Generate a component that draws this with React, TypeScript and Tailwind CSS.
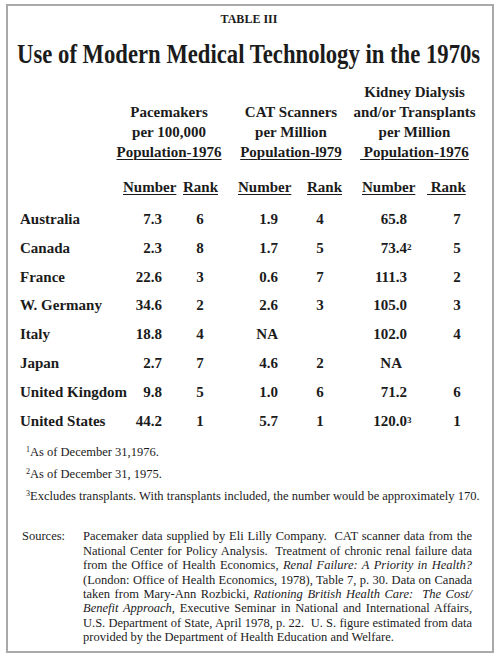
const rows = [
  { name: 'Australia', pn: '7.3', pr: '6', cn: '1.9', cr: '4', kn: '65.8', kr: '7' },
  { name: 'Canada', pn: '2.3', pr: '8', cn: '1.7', cr: '5', kn: '73.4', ks: '2', kr: '5' },
  { name: 'France', pn: '22.6', pr: '3', cn: '0.6', cr: '7', kn: '111.3', kr: '2' },
  { name: 'W. Germany', pn: '34.6', pr: '2', cn: '2.6', cr: '3', kn: '105.0', kr: '3' },
  { name: 'Italy', pn: '18.8', pr: '4', cn: 'NA', cr: '', kn: '102.0', kr: '4' },
  { name: 'Japan', pn: '2.7', pr: '7', cn: '4.6', cr: '2', kn: 'NA', kr: '' },
  { name: 'United Kingdom', pn: '9.8', pr: '5', cn: '1.0', cr: '6', kn: '71.2', kr: '6' },
  { name: 'United States', pn: '44.2', pr: '1', cn: '5.7', cr: '1', kn: '120.0', ks: '3', kr: '1' },
];

const App = () => {
  return (
    <div
      className="w-[500px] h-[657px] bg-white pt-[4px] pl-[6px] text-[#1b1b1b]"
      style={{ fontFamily: '"Liberation Serif", "Times New Roman", serif' }}
    >
      <div className="w-[488px] h-[649px] border-2 border-[#a9a9a9] pl-[12px] pt-[6px]">
        {/* titulo */}
        <div className="text-center text-[12px] leading-[14px] font-bold pr-[14px]">TABLE III</div>
        <div className="mt-[12px] pr-[14px] flex justify-center">
          <div className="shrink-0 text-[27px] leading-[32px] font-bold scale-x-[0.84] whitespace-nowrap">
            Use of Modern Medical Technology in the 1970s
          </div>
        </div>

        {/* tabla */}
        <div className="mt-[12px] grid grid-cols-[98px_62px_40px_80px_40px_85px_64px] text-[15px] font-bold">
          <div />
          <div className="col-span-2 self-end flex flex-col items-center leading-[20px] whitespace-nowrap">
            <span>Pacemakers</span>
            <span>per 100,000</span>
            <span className="underline underline-offset-2 decoration-1">Population-1976</span>
          </div>
          <div className="col-span-2 self-end flex flex-col items-center pl-[22px] leading-[20px] whitespace-nowrap">
            <span>CAT Scanners</span>
            <span>per Million</span>
            <span className="underline underline-offset-2 decoration-1">Population-l979</span>
          </div>
          <div className="col-span-2 self-end flex flex-col items-center leading-[20px] whitespace-nowrap">
            <span>Kidney Dialysis</span>
            <span>and/or Transplants</span>
            <span>per Million</span>
            <span className="underline underline-offset-2 decoration-1 whitespace-pre"> Population-1976</span>
          </div>

          {/* sub encabezados */}
          <div className="mt-[15px]" />
          <div className="mt-[15px] pl-[5px] leading-[20px]">
            <span className="underline underline-offset-2 decoration-1">Number</span>
          </div>
          <div className="mt-[15px] pl-[3px] leading-[20px]">
            <span className="underline underline-offset-2 decoration-1">Rank</span>
          </div>
          <div className="mt-[15px] pl-[18px] leading-[20px]">
            <span className="underline underline-offset-2 decoration-1">Number</span>
          </div>
          <div className="mt-[15px] pl-[7px] leading-[20px]">
            <span className="underline underline-offset-2 decoration-1">Rank</span>
          </div>
          <div className="mt-[15px] pl-[22px] leading-[20px]">
            <span className="underline underline-offset-2 decoration-1">Number</span>
          </div>
          <div className="mt-[15px] pl-[2px] leading-[20px]">
            <span className="underline underline-offset-2 decoration-1 whitespace-pre"> Rank</span>
          </div>

          <div className="col-span-7 h-[8px]" />

          {rows.map((r) => (
            <div key={r.name} className="contents leading-[28.8px]">
              <div className="whitespace-nowrap">{r.name}</div>
              <div className="text-right pr-[18px]">{r.pn}</div>
              <div className="text-center">{r.pr}</div>
              <div className="text-right pr-[22px]">{r.cn}</div>
              <div className="text-center">{r.cr}</div>
              <div className={r.kn === 'NA' ? 'text-right pr-[23px]' : 'text-right pr-[18px]'}>
                <span className="relative">
                  {r.kn}
                  {r.ks && (
                    <span className="absolute left-full top-[-7px] text-[9px] font-bold leading-[28px]">
                      {r.ks}
                    </span>
                  )}
                </span>
              </div>
              <div className="text-center">{r.kr}</div>
            </div>
          ))}
        </div>

        {/* notas */}
        <div className="mt-[6px] pl-[6px] text-[12.5px] leading-[22px]">
          <div>
            <sup className="text-[8px]">1</sup>As of December 31,1976.
          </div>
          <div>
            <sup className="text-[8px]">2</sup>As of December 31, 1975.
          </div>
          <div className="whitespace-nowrap">
            <sup className="text-[8px]">3</sup>Excludes transplants. With transplants included, the number would be approximately 170.
          </div>
        </div>

        <div className="mt-[22px] flex text-[12.5px] leading-[14.4px]">
          <div className="w-[63px] pl-[2px]">Sources:</div>
          <div className="w-[389px] text-justify [text-align-last:justify]">
            <div className="whitespace-pre">Pacemaker data supplied by Eli Lilly Company.  CAT scanner data from the</div>
            <div className="whitespace-pre">National Center for Policy Analysis.  Treatment of chronic renal failure data</div>
            <div>
              from the Office of Health Economics, <i>Renal Failure: A Priority in Health?</i>
            </div>
            <div>(London: Office of Health Economics, 1978), Table 7, p. 30. Data on Canada</div>
            <div>
              taken from Mary-Ann Rozbicki, <i>Rationing British Health Care:&nbsp; The Cost/</i>
            </div>
            <div>
              <i>Benefit Approach</i>, Executive Seminar in National and International Affairs,
            </div>
            <div className="whitespace-pre">U.S. Department of State, April 1978, p. 22.  U. S. figure estimated from data</div>
            <div className="[text-align-last:left]">provided by the Department of Health Education and Welfare.</div>
          </div>
        </div>
      </div>
    </div>
  );
};

export default App;
